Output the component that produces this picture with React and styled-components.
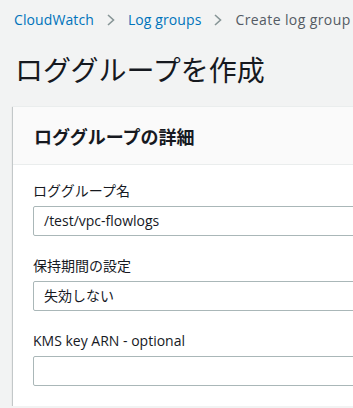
import React from "react";
import styled, { createGlobalStyle } from "styled-components";

const Global = createGlobalStyle`
  html, body { margin: 0; padding: 0; background: #f2f3f3; overflow: hidden; }
  body { font-family: "Open Sans", "Noto Sans CJK JP", sans-serif; color: #16191f; }
`;

const Page = styled.div`
  padding: 9px 0 0 14px;
  width: 420px;
`;

const Breadcrumbs = styled.nav`
  display: flex;
  align-items: center;
  gap: 12px;
  font-size: 14px;
  line-height: 22px;
  white-space: nowrap;
`;

const Crumb = styled.span`
  color: ${(p) => (p.$current ? "#545b64" : "#0073bb")};
  letter-spacing: ${(p) => (p.$current ? "0.4px" : "0.1px")};
`;

const Chevron = styled.svg`
  width: 10px;
  height: 12px;
  flex: none;
`;

const Title = styled.h1`
  margin: 20px 0 0 1px;
  font-size: 28px;
  font-weight: 400;
  line-height: 36px;
  color: #16191f;
  font-family: "Noto Sans CJK JP", sans-serif;
`;

const Card = styled.section`
  margin: 19px 0 0 -1px;
  background: #fff;
  border-top: 1px solid #eaeded;
  box-shadow: 0 1px 1px 0 rgba(0, 28, 36, 0.3), 1px 1px 1px 0 rgba(0, 28, 36, 0.15),
    -1px 1px 1px 0 rgba(0, 28, 36, 0.15);
`;

const CardHeader = styled.header`
  background: #fafafa;
  border-bottom: 1px solid #eaeded;
  height: 57px;
  display: flex;
  align-items: center;
  padding: 0 21px;
  font-size: 18px;
  font-weight: 700;
  font-family: "Noto Sans CJK JP", sans-serif;
`;

const CardBody = styled.div`
  padding: 15px 20px 20px 20px;
  display: flex;
  flex-direction: column;
  gap: 19px;
`;

const Field = styled.div`
  display: flex;
  flex-direction: column;
  gap: 4px;
`;

const Label = styled.label`
  font-size: 14px;
  line-height: 22px;
  color: #16191f;
`;

const Input = styled.div`
  box-sizing: border-box;
  height: 30px;
  border: 1px solid #aab7b8;
  border-radius: 2px;
  background: #fff;
  padding: 0 10px;
  font-size: 14px;
  line-height: 28px;
  color: #16191f;
`;

const Arrow = () => (
  <Chevron viewBox="0 0 10 12">
    <path d="M2 1 L7.5 6 L2 11" fill="none" stroke="#879596" strokeWidth="1.6" />
  </Chevron>
);

export default function App() {
  return (
    <>
      <Global />
      <Page>
        <Breadcrumbs>
          <Crumb>CloudWatch</Crumb>
          <Arrow />
          <Crumb>Log groups</Crumb>
          <Arrow />
          <Crumb $current>Create log group</Crumb>
        </Breadcrumbs>
        <Title>ロググループを作成</Title>
        <Card>
          <CardHeader>ロググループの詳細</CardHeader>
          <CardBody>
            <Field>
              <Label>ロググループ名</Label>
              <Input>/test/vpc-flowlogs</Input>
            </Field>
            <Field>
              <Label>保持期間の設定</Label>
              <Input>失効しない</Input>
            </Field>
            <Field>
              <Label>KMS key ARN - optional</Label>
              <Input />
            </Field>
          </CardBody>
        </Card>
      </Page>
    </>
  );
}
